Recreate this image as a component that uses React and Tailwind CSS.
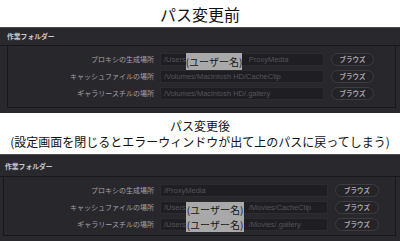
import React from 'react';

const JP = "font-['Noto_Sans_CJK_JP','Noto_Sans',sans-serif]";
const SANS = "font-['Liberation_Sans','Noto_Sans_CJK_JP',sans-serif]";

const Row = ({ label, pre, post, labelW, inputW, btnW }) => (
  <div className="flex items-center h-[13px]">
    <div className={`${labelW} shrink-0 text-right text-[7px] leading-none text-[#a3a2a8] pr-[6px] ${JP}`}>
      {label}
    </div>
    <div
      className={`${inputW} shrink-0 h-[13px] bg-[#1f1e23] border border-[#2c2b30] flex items-center px-[3px] text-[7.5px] text-[#55545a] overflow-hidden whitespace-nowrap ${SANS}`}
    >
      {pre}
      {post !== undefined && <span className="inline-block w-[61px] shrink-0" />}
      {post}
    </div>
    <div
      className={`${btnW} shrink-0 ml-[7px] h-[13px] rounded-full border border-[#3d3c42] bg-[#242328] flex items-center justify-center text-[6.5px] font-bold text-[#a8a7ad] ${JP}`}
    >
      ブラウズ
    </div>
  </div>
);

const Panel = ({ rows, boxLeft, headerCls, labelW, inputW, btnW, height, children }) => (
  <div className={`relative ${height} bg-[#29282d] border-t border-[#4a494f] flex flex-col`}>
    <div className={`${headerCls} flex items-center text-[6.8px] font-bold text-[#c9c8cd] ${JP}`}>
      作業フォルダー
    </div>
    <div className="h-px bg-[#18171b]" />
    <div className={`flex-1 ${boxLeft} pr-[4px] pb-[5px]`}>
      <div className="h-full border border-[#18171b] border-t-0 bg-[#28272c] flex flex-col gap-[4px] pt-[7px]">
        {rows.map((r) => (
          <Row key={r.label} {...r} labelW={labelW} inputW={inputW} btnW={btnW} />
        ))}
      </div>
    </div>
    {children}
  </div>
);

const tagCls = `bg-[#a9a9a9] text-[#151515] text-[10px] whitespace-nowrap ${JP}`;

export default function App() {
  return (
    <div className="w-[400px] h-[241px] bg-white overflow-hidden flex flex-col">
      <div className={`h-[27px] shrink-0 flex items-center justify-center text-[16px] text-[#111] ${JP}`}>
        パス変更前
      </div>
      <Panel
        height="h-[86px] shrink-0"
        headerCls="h-[17px] pl-[7px]"
        boxLeft="pl-[7px]"
        labelW="w-[152px]"
        inputW="w-[164px]"
        btnW="w-[43px]"
        rows={[
          { label: 'プロキシの生成場所', pre: '/Users/', post: 'ProxyMedia' },
          { label: 'キャッシュファイルの場所', pre: '/Volumes/Macintosh HD/CacheClip' },
          { label: 'ギャラリースチルの場所', pre: '/Volumes/Macintosh HD/.gallery' },
        ]}
      >
        <div className={`absolute left-[186px] top-[25px] w-[56px] h-[17px] flex items-center justify-center ${tagCls}`}>
          (ユーザー名)
        </div>
      </Panel>
      <div className={`h-[41px] shrink-0 flex flex-col items-center justify-center text-[12px] leading-[16px] text-[#111] ${JP}`}>
        <div>パス変更後</div>
        <div className="whitespace-nowrap">(設定画面を閉じるとエラーウィンドウが出て上のパスに戻ってしまう)</div>
      </div>
      <Panel
        height="flex-1"
        headerCls="h-[21px] pl-[5px] pt-[2px]"
        boxLeft="pl-[3px]"
        labelW="w-[156px]"
        inputW="w-[168px]"
        btnW="w-[44px]"
        rows={[
          { label: 'プロキシの生成場所', pre: '/ProxyMedia' },
          { label: 'キャッシュファイルの場所', pre: '/Users/', post: '/Movies/CacheClip' },
          { label: 'ギャラリースチルの場所', pre: '/Users/', post: '/Movies/.gallery' },
        ]}
      >
        <div className={`absolute left-[186px] top-[47px] w-[58px] h-[30px] flex flex-col items-center justify-center leading-[15px] ${tagCls}`}>
          <div>(ユーザー名)</div>
          <div>(ユーザー名)</div>
        </div>
      </Panel>
    </div>
  );
}
